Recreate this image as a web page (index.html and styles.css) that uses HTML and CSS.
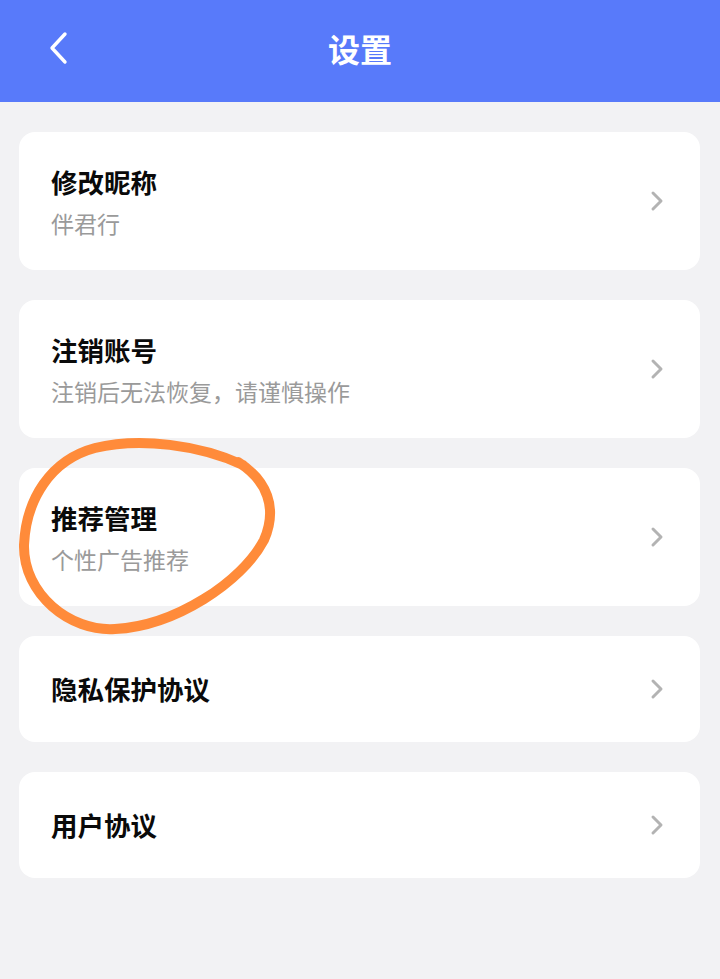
FILE: index.html
```html
<!DOCTYPE html>
<html lang="zh-CN">
<head>
<meta charset="utf-8">
<title>设置</title>
<link rel="stylesheet" href="styles.css">
</head>
<body>
<div class="page">
  <header class="topbar">
    <span class="back">
      <svg width="24" height="34" viewBox="0 0 24 34"><path d="M18 3 L5 17 L18 31" fill="none" stroke="#fff" stroke-width="3.4" stroke-linecap="round" stroke-linejoin="round"/></svg>
    </span>
    <h1 class="title">设置</h1>
  </header>
  <main class="list">
    <div class="card card-sub">
      <div class="text"><div class="name">修改昵称</div><div class="desc">伴君行</div></div>
      <svg class="chev" width="16" height="22" viewBox="0 0 16 22"><path d="M4 3 L12 11 L4 19" fill="none" stroke="#b3b3b3" stroke-width="3" stroke-linecap="round" stroke-linejoin="round"/></svg>
    </div>
    <div class="card card-sub">
      <div class="text"><div class="name">注销账号</div><div class="desc">注销后无法恢复，请谨慎操作</div></div>
      <svg class="chev" width="16" height="22" viewBox="0 0 16 22"><path d="M4 3 L12 11 L4 19" fill="none" stroke="#b3b3b3" stroke-width="3" stroke-linecap="round" stroke-linejoin="round"/></svg>
    </div>
    <div class="card card-sub">
      <div class="text"><div class="name">推荐管理</div><div class="desc">个性广告推荐</div></div>
      <svg class="chev" width="16" height="22" viewBox="0 0 16 22"><path d="M4 3 L12 11 L4 19" fill="none" stroke="#b3b3b3" stroke-width="3" stroke-linecap="round" stroke-linejoin="round"/></svg>
    </div>
    <div class="card card-one">
      <div class="text"><div class="name">隐私保护协议</div></div>
      <svg class="chev" width="16" height="22" viewBox="0 0 16 22"><path d="M4 3 L12 11 L4 19" fill="none" stroke="#b3b3b3" stroke-width="3" stroke-linecap="round" stroke-linejoin="round"/></svg>
    </div>
    <div class="card card-one">
      <div class="text"><div class="name">用户协议</div></div>
      <svg class="chev" width="16" height="22" viewBox="0 0 16 22"><path d="M4 3 L12 11 L4 19" fill="none" stroke="#b3b3b3" stroke-width="3" stroke-linecap="round" stroke-linejoin="round"/></svg>
    </div>
  </main>
  <svg class="annot" width="720" height="979" viewBox="0 0 720 979">
    <path d="M243 465 C200 445, 140 437, 95 448 C50 460, 26 500, 24 545 C23 594, 70 632, 115 629 C175 626, 242 582, 264 540 C278 508, 267 480, 238 462" fill="none" stroke="#ff8b3a" stroke-width="10" stroke-linecap="round" stroke-linejoin="round"/>
  </svg>
</div>
</body>
</html>
```

FILE: styles.css
```css
html, body {
  margin: 0;
  padding: 0;
  background: #f2f2f4;
}
body {
  font-family: "Noto Sans CJK SC", "Noto Sans", sans-serif;
}
.page {
  position: relative;
  width: 720px;
  min-height: 979px;
  background: #f2f2f4;
}
.topbar {
  height: 102px;
  background: #587afa;
  display: flex;
  align-items: center;
  justify-content: center;
  position: relative;
}
.back {
  position: absolute;
  left: 47px;
  top: 31px;
  width: 24px;
  height: 34px;
  display: block;
}
.back svg { display: block; }
.title {
  margin: 0;
  margin-top: -6px;
  color: #fff;
  font-size: 32px;
  font-weight: 700;
  line-height: 40px;
}
.list {
  display: flex;
  flex-direction: column;
  gap: 30px;
  padding: 30px 20px 0 19px;
}
.card {
  background: #fff;
  border-radius: 16px;
  display: flex;
  align-items: center;
  justify-content: space-between;
  padding-left: 32px;
  padding-right: 35px;
  box-sizing: border-box;
}
.card-sub {
  height: 138px;
}
.card-one {
  height: 106px;
}
.name {
  font-size: 26.5px;
  font-weight: 700;
  line-height: 36px;
  color: #0a0a0a;
}
.desc {
  margin-top: 8px;
  font-size: 23px;
  line-height: 30px;
  color: #9a9a9a;
}
.chev { display: block; flex: none; }
.annot {
  position: absolute;
  left: 0;
  top: 0;
  pointer-events: none;
}
```
